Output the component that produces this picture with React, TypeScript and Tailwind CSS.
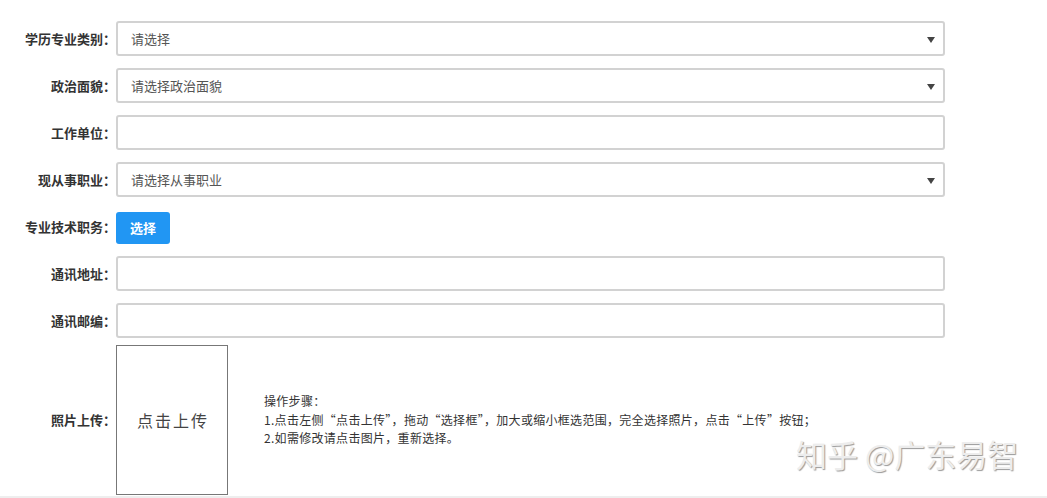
import React from 'react';

const font = { fontFamily: '"Microsoft YaHei", "Noto Sans CJK SC", "Noto Sans", sans-serif' };

function Label({ text }: { text: string }) {
  return (
    <div className="w-[116px] shrink-0 text-right text-[13px] font-bold text-[#333]">
      {text}
    </div>
  );
}

function Arrow() {
  return (
    <svg width="8" height="6" viewBox="0 0 8 6" className="absolute right-[8px] top-[14px]">
      <path d="M0 0 H8 L4 6 Z" fill="#444" />
    </svg>
  );
}

function SelectBox({ placeholder }: { placeholder: string }) {
  return (
    <div className="relative flex h-[35px] w-[829px] items-center rounded-[3px] border-2 border-[#d2d2d2] bg-white pl-[13px] text-[13px] text-[#555]">
      {placeholder}
      <Arrow />
    </div>
  );
}

function TextBox() {
  return <div className="h-[35px] w-[829px] rounded-[3px] border-2 border-[#d2d2d2] bg-white" />;
}

export default function App() {
  const rows: { label: string; kind: 'select' | 'input'; placeholder?: string }[] = [
    { label: '学历专业类别：', kind: 'select', placeholder: '请选择' },
    { label: '政治面貌：', kind: 'select', placeholder: '请选择政治面貌' },
    { label: '工作单位：', kind: 'input' },
    { label: '现从事职业：', kind: 'select', placeholder: '请选择从事职业' },
  ];

  return (
    <div className="relative h-[498px] w-[1047px] overflow-hidden bg-white" style={font}>
      <div className="flex flex-col gap-[12px] pt-[21px]">
        {rows.map((r) => (
          <div key={r.label} className="flex items-center">
            <Label text={r.label} />
            {r.kind === 'select' ? <SelectBox placeholder={r.placeholder!} /> : <TextBox />}
          </div>
        ))}

        <div className="flex h-[35px] items-center">
          <Label text="专业技术职务：" />
          <button className="mt-[2px] h-[32px] w-[54px] rounded-[3px] bg-[#2196f3] text-[13px] font-bold text-white">
            选择
          </button>
        </div>

        <div className="flex items-center">
          <Label text="通讯地址：" />
          <TextBox />
        </div>

        <div className="flex items-center">
          <Label text="通讯邮编：" />
          <TextBox />
        </div>
      </div>

      <div className="mt-[7px] flex items-center">
        <Label text="照片上传：" />
        <div className="flex h-[150px] w-[112px] items-center justify-center border border-[#777] pl-[2px] text-[16px] tracking-[2px] text-[#444]">
          点击上传
        </div>
        <div className="ml-[36px] text-[12px] leading-[18.5px] tracking-[0.3px] text-[#333]">
          <div>操作步骤：</div>
          <div>1.点击左侧“点击上传”，拖动“选择框”，加大或缩小框选范围，完全选择照片，点击“上传”按钮；</div>
          <div>2.如需修改请点击图片，重新选择。</div>
        </div>
      </div>

      <div className="absolute bottom-0 left-0 h-[2px] w-full bg-[#eeeeee]" />

      <div className="absolute left-[796px] top-[436px] text-[31px] leading-[36px] text-[#ededed] [text-shadow:1px_1px_1px_rgba(0,0,0,0.4)]">
        知乎 @广东易智
      </div>
    </div>
  );
}
